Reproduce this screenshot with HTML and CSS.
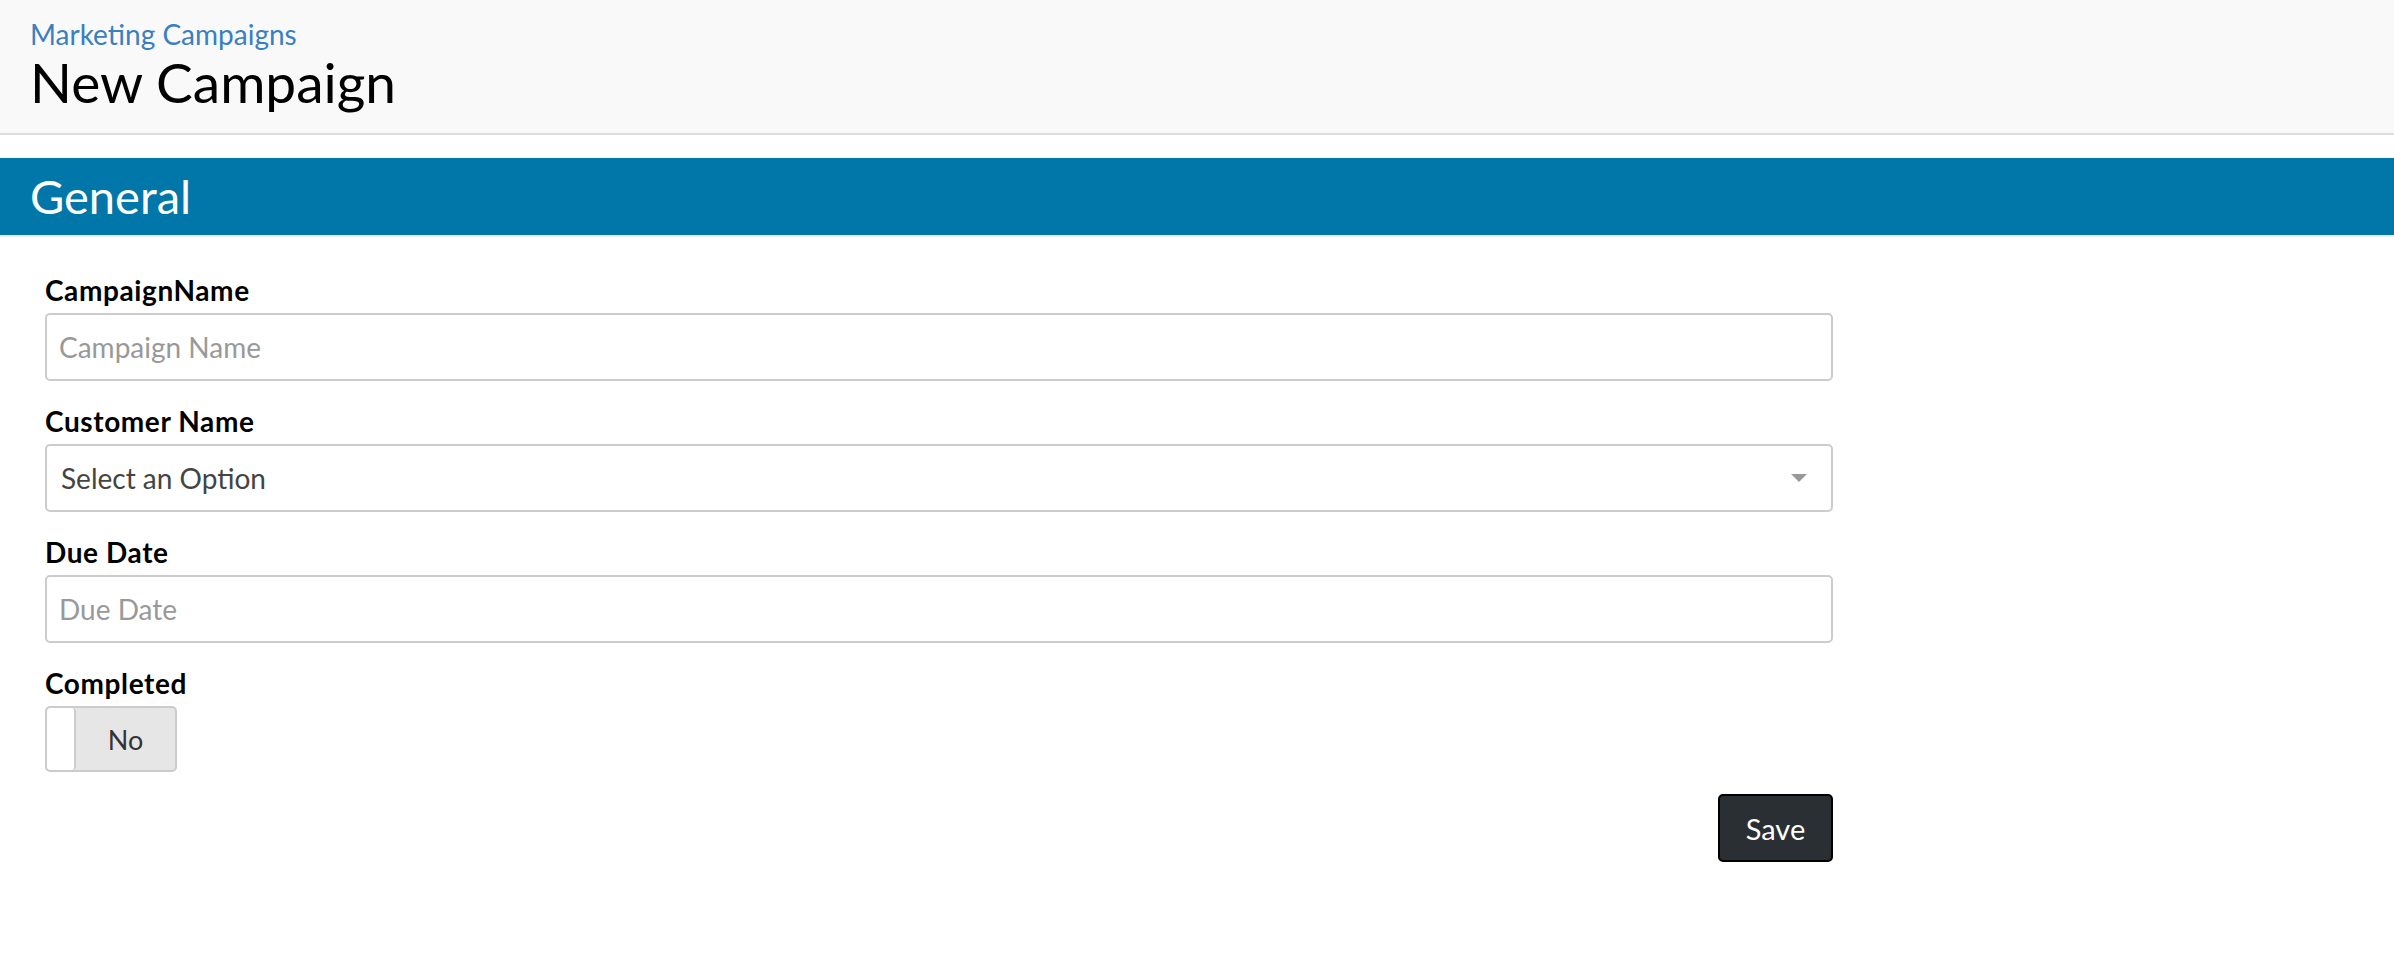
FILE: index.html
```html
<!DOCTYPE html>
<html lang="en">
<head>
<meta charset="utf-8">
<title>New Campaign</title>
<link rel="stylesheet" href="styles.css">
</head>
<body>
<header class="page-header">
  <a class="breadcrumb" href="#">Marketing Campaigns</a>
  <h1 class="page-title">New Campaign</h1>
</header>
<section class="section">
  <h2 class="section-title">General</h2>
  <form class="form">
    <div class="field">
      <label class="field-label">CampaignName</label>
      <input class="text-input" type="text" placeholder="Campaign Name">
    </div>
    <div class="field">
      <label class="field-label">Customer Name</label>
      <div class="select">
        <span class="select-value">Select an Option</span>
        <span class="select-caret"></span>
      </div>
    </div>
    <div class="field">
      <label class="field-label">Due Date</label>
      <input class="text-input" type="text" placeholder="Due Date">
    </div>
    <div class="field">
      <label class="field-label">Completed</label>
      <div class="toggle">
        <span class="toggle-knob"></span>
        <span class="toggle-text">No</span>
      </div>
    </div>
    <div class="actions">
      <button class="btn-save" type="button">Save</button>
    </div>
  </form>
</section>
</body>
</html>
```
FILE: styles.css
```css
* { box-sizing: border-box; }
html, body { margin: 0; padding: 0; background: #fff; }
body { font-family: "Source Sans Pro", Lato, "Noto Sans", sans-serif; color: #000; }

.page-header {
  height: 135px;
  background: #f9f9f9;
  border-bottom: 2px solid #dddddd;
  padding: 18px 30px 0;
}
.breadcrumb {
  display: block;
  color: #3a7fc1;
  text-decoration: none;
  font-size: 28px;
  line-height: 33px;
}
.page-title {
  margin: 0;
  font-weight: 400;
  font-size: 55px;
  line-height: 62px;
}

.section { margin-top: 23px; }
.section-title {
  margin: 0;
  height: 79px;
  background: #0077a8;
  border-bottom: 2px solid #ebebeb;
  color: #fff;
  font-weight: 400;
  font-size: 47px;
  line-height: 77px;
  padding-left: 30px;
}

.form {
  width: 1833px;
  padding: 36px 0 0 45px;
  display: flex;
  flex-direction: column;
}
.field { display: flex; flex-direction: column; margin-bottom: 23px; }
.field-label {
  font-weight: 700;
  font-size: 28px;
  letter-spacing: 0.6px;
  line-height: 34px;
  margin-bottom: 6px;
}
.text-input, .select {
  width: 100%;
  height: 68px;
  border: 2px solid #cccccc;
  border-radius: 5px;
  padding: 0 12px;
  font-family: inherit;
  font-size: 28px;
  color: #444;
  background: #fff;
  outline: none;
}
.text-input::placeholder { color: #999; }
.select {
  display: flex;
  align-items: center;
  justify-content: space-between;
  padding: 0 24px 0 14px;
  color: #444;
}
.select-caret {
  width: 0; height: 0;
  border-left: 8px solid transparent;
  border-right: 8px solid transparent;
  border-top: 8px solid #999;
}
.toggle {
  width: 132px;
  height: 66px;
  display: flex;
  border: 2px solid #cccccc;
  border-radius: 5px;
  background: #e6e6e6;
  overflow: hidden;
}
.toggle-knob {
  width: 29px;
  background: #fff;
  border-right: 2px solid #cccccc;
  border-radius: 4px;
}
.toggle-text {
  flex: 1;
  display: flex;
  align-items: center;
  justify-content: center;
  font-size: 27px;
  color: #333;
}
.actions { display: flex; justify-content: flex-end; margin-top: -1px; }
.btn-save {
  width: 115px;
  height: 68px;
  background: #2a2f33;
  border: 2px solid #000;
  border-radius: 5px;
  color: #fff;
  font-family: inherit;
  font-size: 29px;
}
```
